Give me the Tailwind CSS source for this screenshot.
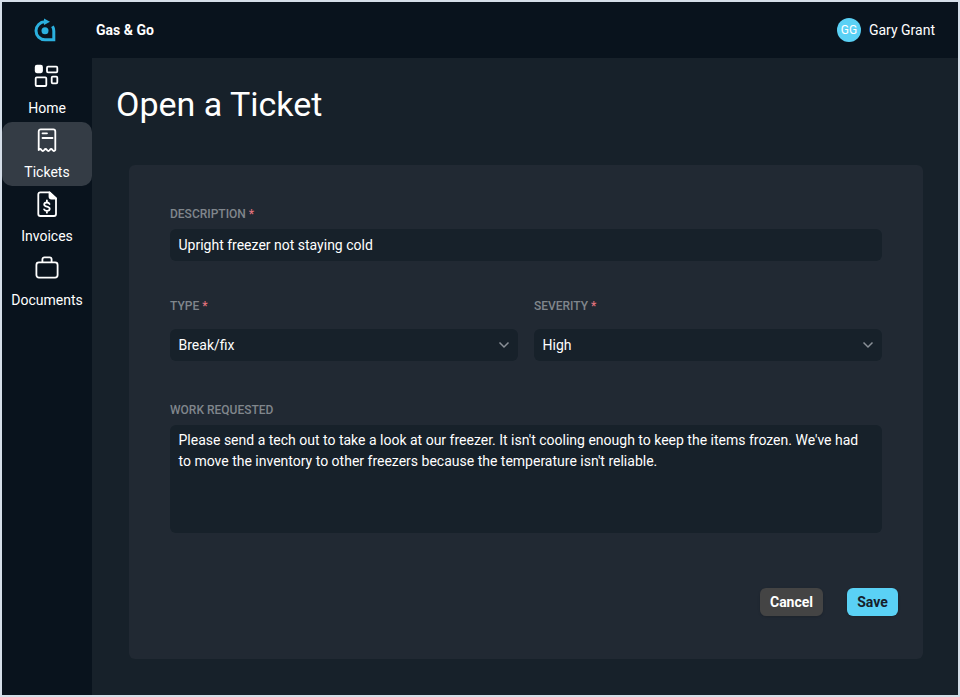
<!DOCTYPE html>
<html lang="en">
<head>
    <meta charset="UTF-8">
    <title>Open a Ticket</title>
    <script src="https://cdn.jsdelivr.net/npm/@tailwindcss/browser@4"></script>
</head>
<body class="bg-[#d5dee8]">
<div class="h-[697px] w-[960px] p-[2px] font-['Roboto',sans-serif] text-white">
    <div class="flex h-full w-full bg-[#09131d]">
        <!-- Sidebar -->
        <nav class="flex w-[90px] shrink-0 flex-col">
            <div class="flex h-[56px] items-center justify-center pr-[4px]">
                <svg width="22" height="24" viewBox="0 0 22 24" fill="none" stroke="#2bb0de" stroke-width="3">
                    <path d="M11 3.800A9 9 0 0 0 11 21.800H19.800V13A9 9 0 0 0 18.500 8.300"/>
                    <path d="M10 .5l6 3.300L10 7z" fill="#2bb0de" stroke="none"/>
                    <circle cx="11" cy="12.800" r="3.500" fill="#2bb0de" stroke="none"/>
                </svg>
            </div>
            <a class="flex h-[64px] flex-col items-center pt-[5px] text-sm">
                <svg width="26" height="26" viewBox="0 0 26 26" fill="none" stroke="#fff" stroke-width="1.800">
                    <rect x="1.700" y="2.700" width="6.300" height="6.600" rx="1.200" fill="#fff"/>
                    <rect x="13" y="3.700" width="10.300" height="5.600" rx="1"/>
                    <rect x="1.700" y="14.400" width="10.600" height="8.600" rx="1"/>
                    <rect x="17.700" y="13.700" width="5.600" height="6.600" rx="1"/>
                </svg>
                <span class="mt-[9px] leading-[20px]">Home</span>
            </a>
            <a class="flex h-[64px] flex-col items-center rounded-[10px] bg-[#343c45] pt-[5px] text-sm">
                <svg width="26" height="26" viewBox="0 0 26 26" fill="none" stroke="#fff" stroke-width="1.800" stroke-linejoin="round" stroke-linecap="round">
                    <path d="M4.700 23V4.400a2 2 0 0 1 2-2H19.300a2 2 0 0 1 2 2V23q-1.400 2-2.770 0q-1.400-2-2.770 0q-1.400 2-2.770 0q-1.400-2-2.770 0q-1.400 2-2.770 0q-1.400-2-2.770 0z"/>
                    <path d="M8.500 6.300h4.500M8.500 11h10"/>
                </svg>
                <span class="mt-[9px] leading-[20px]">Tickets</span>
            </a>
            <a class="flex h-[64px] flex-col items-center pt-[5px] text-sm">
                <svg width="26" height="26" viewBox="0 0 26 26" fill="none" stroke="#fff" stroke-width="1.800" stroke-linejoin="round" stroke-linecap="round">
                    <path d="M15.500 1.400H6.300a2 2 0 0 0-2 2V23a2 2 0 0 0 2 2H20a2 2 0 0 0 2-2V7.500z"/>
                    <path d="M15.500 1.400V5.500a2 2 0 0 0 2 2H22z" fill="#fff"/>
                    <path d="M15.500 13c-.4-1-1.400-1.500-2.600-1.500-1.600 0-2.700.8-2.700 2 0 2.800 5.500 1.400 5.500 4.300 0 1.200-1.200 2.100-2.800 2.100-1.300 0-2.300-.6-2.800-1.500M12.900 9.300v2.200M12.900 20v1.700"/>
                </svg>
                <span class="mt-[9px] leading-[20px]">Invoices</span>
            </a>
            <a class="flex h-[64px] flex-col items-center pt-[5px] text-sm">
                <svg width="26" height="26" viewBox="0 0 26 26" fill="none" stroke="#fff" stroke-width="1.800" stroke-linejoin="round">
                    <rect x="2.400" y="7.400" width="21.200" height="15.200" rx="2.500"/>
                    <path d="M8.400 7.400V4.400a2 2 0 0 1 2-2h5.200a2 2 0 0 1 2 2V7.400"/>
                </svg>
                <span class="mt-[9px] leading-[20px]">Documents</span>
            </a>
        </nav>
        <div class="flex min-w-0 flex-1 flex-col">
            <!-- Top bar -->
            <header class="flex h-[56px] shrink-0 items-center justify-between pl-[4px] pr-[23px]">
                <span class="text-sm font-bold">Gas &amp; Go</span>
                <div class="flex items-center gap-[8px]">
                    <span class="flex h-[24px] w-[24px] items-center justify-center rounded-full bg-[#5ad1f5] text-xs">GG</span>
                    <span class="text-sm">Gary Grant</span>
                </div>
            </header>
            <main class="flex-1 bg-[#17212a] pl-[24px] pr-[35px]">
                <h1 class="pt-[23px] text-[34px] leading-[46px]">Open a Ticket</h1>
                <!-- Form card -->
                <form class="mt-[38px] ml-[13px] h-[494px] rounded-[6px] bg-[#212933] px-[41px] pt-[40px]">
                    <label class="block text-xs font-medium leading-[18px] text-[#80868c]">DESCRIPTION <span class="text-[#e0727c]">*</span></label>
                    <div class="mt-[6px] flex h-[32px] items-center rounded-[6px] bg-[#17212a] px-[8.5px] text-sm">Upright freezer not staying cold</div>
                    <div class="mt-[36px] grid grid-cols-2 gap-[16px]">
                        <div>
                            <label class="block text-xs font-medium leading-[18px] text-[#80868c]">TYPE <span class="text-[#e0727c]">*</span></label>
                            <div class="mt-[14px] flex h-[32px] items-center justify-between rounded-[6px] bg-[#17212a] pl-[8.5px] pr-[8px] text-sm">
                                <span>Break/fix</span>
                                <svg width="12" height="12" viewBox="0 0 12 12" fill="none" stroke="#8a9097" stroke-width="1.500"><path d="M1.500 3.500 6 8l4.500-4.500"/></svg>
                            </div>
                        </div>
                        <div>
                            <label class="block text-xs font-medium leading-[18px] text-[#80868c]">SEVERITY <span class="text-[#e0727c]">*</span></label>
                            <div class="mt-[14px] flex h-[32px] items-center justify-between rounded-[6px] bg-[#17212a] pl-[8.5px] pr-[8px] text-sm">
                                <span>High</span>
                                <svg width="12" height="12" viewBox="0 0 12 12" fill="none" stroke="#8a9097" stroke-width="1.500"><path d="M1.500 3.500 6 8l4.500-4.500"/></svg>
                            </div>
                        </div>
                    </div>
                    <label class="mt-[40px] block text-xs font-medium leading-[18px] text-[#80868c]">WORK REQUESTED</label>
                    <div class="mt-[6px] h-[108px] rounded-[6px] bg-[#17212a] pl-[8.5px] pr-[16px] py-[5px] text-sm leading-[21px]">Please send a tech out to take a look at our freezer. It isn't cooling enough to keep the items frozen. We've had to move the inventory to other freezers because the temperature isn't reliable.</div>
                    <div class="mt-[55px] mr-[-16px] flex justify-end gap-[24px]">
                        <button type="button" class="h-[28px] w-[63px] rounded-[6px] bg-[#444444] text-sm font-bold shadow-sm">Cancel</button>
                        <button type="button" class="h-[28px] w-[51px] rounded-[6px] bg-[#5ad1f5] text-sm font-bold text-[#16202a] shadow-sm">Save</button>
                    </div>
                </form>
            </main>
        </div>
    </div>
</div>
</body>
</html>
